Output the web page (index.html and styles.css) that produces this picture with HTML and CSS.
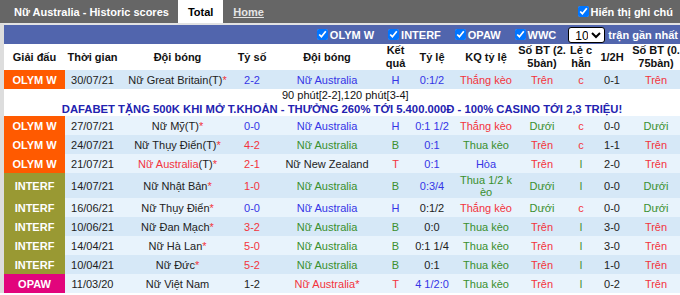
FILE: index.html
```html
<!DOCTYPE html>
<html lang="vi">
<head>
  <meta charset="UTF-8">
  <meta name="viewport" content="width=device-width, initial-scale=1.0">
  <title>Nữ Australia - Historic scores</title>
  <link rel="stylesheet" href="styles.css">
</head>
<body>
  <div class="topbar">
    <span class="title">Nữ Australia - Historic scores</span>
    <span class="tab active">Total</span>
    <a class="tab link" href="#">Home</a>
    <label class="note-toggle"><input type="checkbox" checked>Hiển thị ghi chú</label>
  </div>

  <div class="box">
    <div class="filters">
      <label><input type="checkbox" checked>OLYM W</label>
      <label><input type="checkbox" checked>INTERF</label>
      <label><input type="checkbox" checked>OPAW</label>
      <label><input type="checkbox" checked>WWC</label>
      <select class="count"><option>10</option></select>
      <span>trận gần nhất</span>
    </div>

    <table class="scores">
      <colgroup>
        <col style="width:61px"><col style="width:55px"><col style="width:115px"><col style="width:34px">
        <col style="width:116px"><col style="width:21px"><col style="width:52px"><col style="width:56px">
        <col style="width:56px"><col style="width:22px"><col style="width:40px"><col>
      </colgroup>
      <thead>
        <tr>
          <th>Giải đấu</th><th>Thời gian</th><th>Đội bóng</th><th>Tỷ số</th><th>Đội bóng</th>
          <th>Kết<br>quả</th><th>Tỷ lệ</th><th>KQ tỷ lệ</th><th>Số BT (2.<br>5bàn)</th>
          <th>Lẻ c<br>hẵn</th><th>1/2H</th><th>Số BT (0.<br>75bàn)</th>
        </tr>
      </thead>
      <tbody>
        <tr class="dark">
          <td class="lg olym">OLYM W</td><td>30/07/21</td><td>Nữ Great Britain(T)<span class="r">*</span></td>
          <td class="b">2-2</td><td class="b">Nữ Australia</td><td class="b">H</td><td class="b">0:1/2</td>
          <td class="r">Thắng kèo</td><td class="r">Trên</td><td class="r">c</td><td>0-1</td><td class="r">Trên</td>
        </tr>
        <tr class="note"><td colspan="12">90 phút[2-2],120 phút[3-4]</td></tr>
        <tr class="ad"><td colspan="12">DAFABET TẶNG 500K KHI MỞ T.KHOẢN - THƯỞNG 260% TỚI 5.400.000Đ - 100% CASINO TỚI 2,3 TRIỆU!</td></tr>
        <tr class="light">
          <td class="lg olym">OLYM W</td><td>27/07/21</td><td>Nữ Mỹ(T)<span class="r">*</span></td>
          <td class="b">0-0</td><td class="b">Nữ Australia</td><td class="b">H</td><td class="b">0:1 1/2</td>
          <td class="r">Thắng kèo</td><td class="g">Dưới</td><td class="r">c</td><td>0-0</td><td class="g">Dưới</td>
        </tr>
        <tr class="dark">
          <td class="lg olym">OLYM W</td><td>24/07/21</td><td>Nữ Thụy Điển(T)<span class="r">*</span></td>
          <td class="r">4-2</td><td class="g">Nữ Australia</td><td class="g">B</td><td class="b">0:1</td>
          <td class="g">Thua kèo</td><td class="r">Trên</td><td class="r">c</td><td>1-1</td><td class="r">Trên</td>
        </tr>
        <tr class="light">
          <td class="lg olym">OLYM W</td><td>21/07/21</td><td><span class="r">Nữ Australia</span>(T)<span class="r">*</span></td>
          <td class="r">2-1</td><td>Nữ New Zealand</td><td class="r">T</td><td class="b">0:1</td>
          <td class="b">Hòa</td><td class="r">Trên</td><td class="g">l</td><td>2-0</td><td class="r">Trên</td>
        </tr>
        <tr class="dark tall">
          <td class="lg interf">INTERF</td><td>14/07/21</td><td>Nữ Nhật Bản<span class="r">*</span></td>
          <td class="r">1-0</td><td class="g">Nữ Australia</td><td class="g">B</td><td class="b">0:3/4</td>
          <td class="g">Thua 1/2 k<br>èo</td><td class="g">Dưới</td><td class="g">l</td><td>0-0</td><td class="g">Dưới</td>
        </tr>
        <tr class="light">
          <td class="lg interf">INTERF</td><td>16/06/21</td><td>Nữ Thụy Điển<span class="r">*</span></td>
          <td class="b">0-0</td><td class="b">Nữ Australia</td><td class="b">H</td><td>0:1/2</td>
          <td class="r">Thắng kèo</td><td class="g">Dưới</td><td class="r">c</td><td>0-0</td><td class="g">Dưới</td>
        </tr>
        <tr class="dark">
          <td class="lg interf">INTERF</td><td>10/06/21</td><td>Nữ Đan Mạch<span class="r">*</span></td>
          <td class="r">3-2</td><td class="g">Nữ Australia</td><td class="g">B</td><td>0:0</td>
          <td class="g">Thua kèo</td><td class="r">Trên</td><td class="g">l</td><td>3-0</td><td class="r">Trên</td>
        </tr>
        <tr class="light">
          <td class="lg interf">INTERF</td><td>14/04/21</td><td>Nữ Hà Lan<span class="r">*</span></td>
          <td class="r">5-0</td><td class="g">Nữ Australia</td><td class="g">B</td><td>0:1 1/4</td>
          <td class="g">Thua kèo</td><td class="r">Trên</td><td class="g">l</td><td>3-0</td><td class="r">Trên</td>
        </tr>
        <tr class="dark">
          <td class="lg interf">INTERF</td><td>10/04/21</td><td>Nữ Đức<span class="r">*</span></td>
          <td class="r">5-2</td><td class="g">Nữ Australia</td><td class="g">B</td><td>0:1</td>
          <td class="g">Thua kèo</td><td class="r">Trên</td><td class="g">l</td><td>1-0</td><td class="r">Trên</td>
        </tr>
        <tr class="light">
          <td class="lg opaw">OPAW</td><td>11/03/20</td><td>Nữ Việt Nam</td>
          <td>1-2</td><td class="r">Nữ Australia*</td><td class="r">T</td><td class="b">4 1/2:0</td>
          <td class="g">Thua kèo</td><td class="r">Trên</td><td class="g">l</td><td>0-2</td><td class="r">Trên</td>
        </tr>
      </tbody>
    </table>
  </div>
</body>
</html>
```

FILE: styles.css
```css
body {
  margin: 0;
  font-family: "Liberation Sans", Arial, sans-serif;
  font-size: 11px;
  color: #222;
  background: #fff;
}

/* Top bar */
.topbar {
  display: flex;
  align-items: stretch;
  height: 23px;
  background: #666;
  font-weight: bold;
}

.title {
  display: flex;
  align-items: center;
  color: #fff;
  padding-left: 14px;
  margin-right: 9px;
}

.tab {
  display: flex;
  align-items: center;
  padding: 0 10px;
}

.tab.active {
  background: #fff;
  color: #000;
}

.tab.link {
  color: #e4e4e4;
  text-decoration: underline;
}

.note-toggle {
  display: flex;
  align-items: center;
  margin-left: auto;
  padding-right: 7px;
  color: #fff;
}

input[type="checkbox"] {
  width: 11px;
  height: 11px;
  margin: 0 2px 0 0;
}

/* Box with filters and table */
.box {
  border-left: 4px solid #ddd;
  border-top: 2px solid #e2e2e2;
}

.filters {
  display: flex;
  align-items: center;
  justify-content: flex-end;
  gap: 3px;
  height: 19px;
  padding-right: 2px;
  background: #5165ad;
  color: #fff;
  font-weight: bold;
}

.filters label {
  display: flex;
  align-items: center;
  margin-right: 11px;
}

.filters label:nth-child(4) {
  margin-right: 9px;
}

.count {
  width: 37px;
  height: 16px;
  padding: 0 0 0 2px;
  font-family: "Liberation Sans", Arial, sans-serif;
  font-size: 12px;
  color: #000;
  background: #fff;
  border: 1px solid #000;
  border-radius: 3px;
}

/* Table */
.scores {
  width: 676px;
  table-layout: fixed;
  border-collapse: collapse;
}

.scores th {
  height: 25px;
  padding: 0;
  font-weight: bold;
  line-height: 13px;
  color: #111;
  white-space: nowrap;
  text-align: center;
}

.scores td {
  height: 19px;
  padding: 0;
  text-align: center;
  white-space: nowrap;
}

.scores tr.tall td {
  height: 25px;
  line-height: 12px;
}

.dark td {
  background: #d6e8f7;
}

.light td {
  background: #e8f3fc;
}

.scores td.lg {
  color: #fff;
  font-weight: bold;
}

.scores td.olym {
  background: #ff5a00;
}

.scores td.interf {
  background: #999933;
}

.scores td.opaw {
  background: #e2057c;
}

.scores tr.note td {
  height: 13px;
  line-height: 13px;
  text-align: left;
  padding-left: 278px;
  color: #111;
}

.scores tr.ad td {
  height: 14px;
  line-height: 14px;
  font-size: 11.25px;
  font-weight: bold;
  color: #2222b0;
}

.r {
  color: #f3343c;
}

.g {
  color: #3a8f2e;
}

.b {
  color: #3535e6;
}
```
